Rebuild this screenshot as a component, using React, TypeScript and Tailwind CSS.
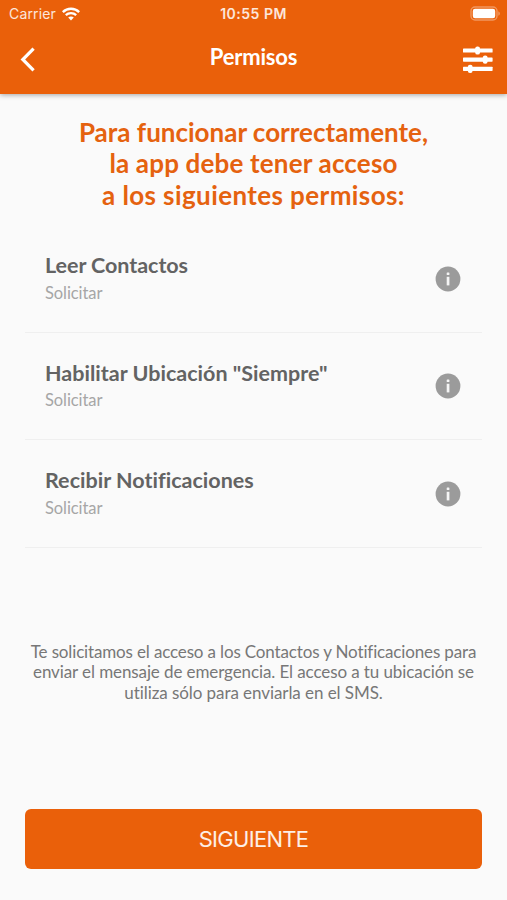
// permissions screen

type Permission = {
  id: string;
  name: string;
  nameClass: string;
};

// letter spacing is tuned per label
const permissions: Permission[] = [
  { id: "contacts", name: "Leer Contactos", nameClass: "tracking-[-0.05px]" },
  { id: "location", name: 'Habilitar Ubicación "Siempre"', nameClass: "tracking-[0.01px]" },
  { id: "notifications", name: "Recibir Notificaciones", nameClass: "tracking-[0.02px]" },
];

function WifiIcon() {
  return (
    <svg className="h-[14px] w-[18px]" viewBox="0 0 18 14" fill="none" stroke="white">
      <path d="M0.8 5.1C5.3 0.5 12.7 0.5 17.2 5.1" strokeWidth="2.5" />
      <path d="M3.8 8.2C6.7 5.4 11.3 5.4 14.2 8.2" strokeWidth="2.3" />
      <path d="M6.2 10.5C7.7 9.1 10.3 9.1 11.8 10.5L9 13.5Z" fill="white" stroke="none" />
    </svg>
  );
}

function BatteryIcon() {
  return (
    <svg className="h-[15px] w-[31px]" viewBox="0 0 31 15">
      <rect x="1" y="1" width="26" height="13" rx="4" fill="none" stroke="white" strokeOpacity="0.35" strokeWidth="1.4" />
      <rect x="2.8" y="2.8" width="22.4" height="9.4" rx="2.2" fill="white" />
      <path d="M28.4 5.2C30.3 6 30.3 9 28.4 9.8Z" fill="white" fillOpacity="0.4" />
    </svg>
  );
}

function BackIcon() {
  return (
    <svg className="h-[26px] w-[18px]" viewBox="0 0 18 26" fill="none" stroke="white" strokeWidth="3.2">
      <path d="M15.6 2.6L4.8 13.5L15.6 24.4" />
    </svg>
  );
}

function SlidersIcon() {
  return (
    <svg className="h-[28px] w-[30px]" viewBox="0 0 30 28" fill="white">
      <rect x="0" y="3.4" width="29.6" height="4.2" rx="0.6" />
      <rect x="0" y="12.5" width="29.6" height="4.2" rx="0.6" />
      <rect x="0" y="21.7" width="29.6" height="4.2" rx="0.6" />
      <rect x="12.2" y="1.4" width="4.8" height="8.2" rx="2.2" />
      <rect x="19.8" y="10.5" width="4.8" height="8.2" rx="2.2" />
      <rect x="4.8" y="19.7" width="4.8" height="8.2" rx="2.2" />
    </svg>
  );
}

function InfoIcon() {
  return (
    <svg className="size-[26px]" viewBox="0 0 26 26">
      <circle cx="13" cy="13" r="12.4" fill="#9b9b9b" />
      <rect x="11.7" y="6.4" width="2.7" height="2.7" rx="0.6" fill="#f5f5f5" />
      <rect x="11.7" y="10.8" width="2.7" height="8.6" fill="#f5f5f5" />
    </svg>
  );
}

function PermissionRow({ permission }: { permission: Permission }) {
  return (
    <li className="flex h-[107.5px] items-start justify-between border-b border-[#efefef] pr-[21px] pl-[20px]">
      <div className="pt-[27px]">
        <h2 className={`text-[21.5px] leading-[27.5px] font-bold whitespace-nowrap text-[#636363] ${permission.nameClass}`}>
          {permission.name}
        </h2>
        <p className="text-[16.5px] leading-[26px] tracking-[-0.08px] text-[#a6a6a6]">Solicitar</p>
      </div>
      <button type="button" aria-label={`Información: ${permission.name}`} className="mt-[40.7px]">
        <InfoIcon />
      </button>
    </li>
  );
}

export default function App() {
  return (
    <div className="flex h-[900px] w-[507px] flex-col overflow-hidden bg-[#fafafa] font-['Lato',sans-serif]">
      <header className="h-[93.5px] shrink-0 bg-[#ea600a] text-white shadow-[0_1px_5px_rgba(0,0,0,0.35)]">
        {/* status bar */}
        <div className="grid h-[27px] grid-cols-3 items-center pr-[6px] pl-[9px] font-['Inter',sans-serif]">
          <div className="flex items-center gap-[6px]">
            <span className="text-[14px] tracking-[0.15px] text-white/85">Carrier</span>
            <WifiIcon />
          </div>
          <span className="pr-[3px] text-center text-[14px] font-semibold tracking-[0.5px] whitespace-nowrap text-white/85">
            10:55 PM
          </span>
          <div className="flex justify-end">
            <BatteryIcon />
          </div>
        </div>

        {/* navigation */}
        <div className="grid h-[64px] grid-cols-3 items-center pr-[14px] pl-[18px]">
          <button type="button" aria-label="Volver" className="w-[18px]">
            <BackIcon />
          </button>
          <h1 className="pr-[4px] pb-[4px] text-center text-[22px] leading-[28px] font-bold tracking-[-0.2px]">Permisos</h1>
          <button type="button" aria-label="Ajustes" className="justify-self-end">
            <SlidersIcon />
          </button>
        </div>
      </header>

      <main className="flex flex-1 flex-col px-[25px]">
        <p className="pt-[23px] text-center text-[26px] leading-[31.8px] font-bold text-[#e5620f]">
          Para funcionar correctamente,
          <br />
          <span className="tracking-[0.17px]">la app debe tener acceso</span>
          <br />
          <span className="tracking-[0.4px]">a los siguientes permisos:</span>
        </p>

        <ul className="mt-[13.2px]">
          {permissions.map((permission) => (
            <PermissionRow key={permission.id} permission={permission} />
          ))}
        </ul>

        <p className="mt-[94px] text-center text-[17px] leading-[20.8px] whitespace-nowrap text-[#777777]">
          <span className="tracking-[-0.15px]">Te solicitamos el acceso a los Contactos y Notificaciones para</span>
          <br />
          <span className="tracking-[-0.1px]">enviar el mensaje de emergencia. El acceso a tu ubicación se</span>
          <br />
          <span className="tracking-[-0.07px]">utiliza sólo para enviarla en el SMS.</span>
        </p>

        <button
          type="button"
          className="mt-auto mb-[31px] h-[60.5px] shrink-0 rounded-[6px] bg-[#ea600a] pt-[1px] font-['Inter',sans-serif] text-[22px] tracking-[-0.7px] text-white/90"
        >
          SIGUIENTE
        </button>
      </main>
    </div>
  );
}
